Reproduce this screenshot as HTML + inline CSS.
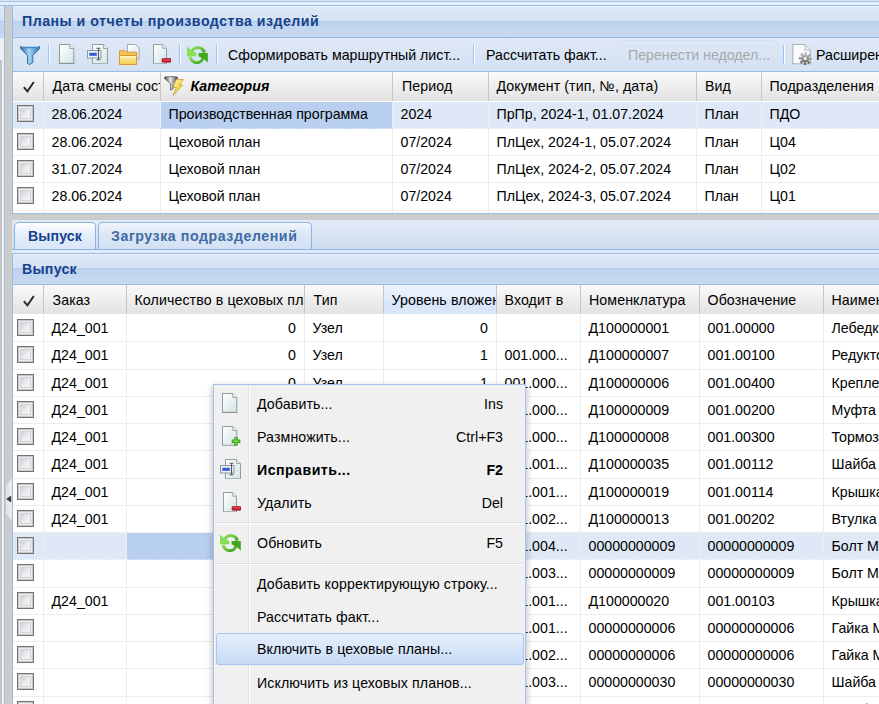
<!DOCTYPE html>
<html><head><meta charset="utf-8"><title>UI</title><style>
*{box-sizing:border-box}
html,body{margin:0;padding:0}
body{width:879px;height:704px;overflow:hidden;position:relative;background:#dfe8f6;font-family:"Liberation Sans",sans-serif;font-size:14.2px;color:#000}
.a{position:absolute}
.t{position:absolute;white-space:nowrap;line-height:16px}
.hl{position:absolute;height:1px}
.vl{position:absolute;width:1px}
.ttl{color:#15428b;font-weight:bold}
.cb{position:absolute;width:17px;height:17px;border:1px solid #727272;background:#ebebeb;box-shadow:inset 0 0 0 1px #c9c9c9}
.cb::after{content:"";position:absolute;left:2px;top:2px;right:2px;bottom:2px;border:1px solid #d2d4d8;background:linear-gradient(135deg,#cbd0d9 0%,#e9ebee 50%,#f5f5f5 100%)}
.clip{position:absolute;overflow:hidden;white-space:nowrap}
</style></head>
<body>
<div class="a" style="left:0;top:0;width:879px;height:5px;background:#e5eefb"></div><div class="hl" style="left:0;top:0;width:879px;background:#d6e0ee"></div><div class="hl" style="left:0;top:1px;width:879px;background:#a9c4ea"></div><div class="hl" style="left:0;top:5px;width:879px;background:#99bbe8"></div><div class="a" style="left:0;top:38px;width:4px;height:22px;background:#f0f0f0"></div><div class="a" style="left:0;top:60px;width:2px;height:644px;background:#c3c3c3"></div><div class="a" style="left:2px;top:60px;width:2px;height:644px;background:#f0f0f0"></div><div class="vl" style="left:4px;top:5px;height:699px;background:#99bbe8"></div><div class="a" style="left:5px;top:6px;width:7px;height:698px;background:#cccccc"></div><div class="vl" style="left:12px;top:5px;height:209px;background:#99bbe8"></div><div class="vl" style="left:12px;top:253px;height:451px;background:#99bbe8"></div><svg class="a" style="left:5px;top:477px" width="7" height="46"><defs><linearGradient id="gH" x1="0" x2="1"><stop offset="0" stop-color="#e2e2e2"/><stop offset="1" stop-color="#efefef"/></linearGradient></defs><path d="M7 1 L1 9 V36 L7 44Z" fill="url(#gH)"/><path d="M6.2 18.5 L1.2 22 L6.2 25.5Z" fill="#383838"/></svg><svg width="0" height="0" style="position:absolute">
<defs>
<linearGradient id="gPage" x1="0" y1="0" x2="1" y2="1"><stop offset="0" stop-color="#ffffff"/><stop offset="1" stop-color="#d3e4e4"/></linearGradient>
<linearGradient id="gFun" x1="0" y1="0" x2="1" y2="0"><stop offset="0" stop-color="#2a6fb0"/><stop offset="0.45" stop-color="#a6d4f2"/><stop offset="1" stop-color="#2d78b8"/></linearGradient>
<linearGradient id="gFold" x1="0" y1="0" x2="0" y2="1"><stop offset="0" stop-color="#fdf2b8"/><stop offset="1" stop-color="#f2cf48"/></linearGradient>
<linearGradient id="gGreen" x1="0" y1="0" x2="1" y2="1"><stop offset="0" stop-color="#92e35a"/><stop offset="1" stop-color="#3aa41a"/></linearGradient>
<linearGradient id="gGray" x1="0" y1="0" x2="1" y2="0"><stop offset="0" stop-color="#404040"/><stop offset="0.45" stop-color="#e8e8e8"/><stop offset="1" stop-color="#484848"/></linearGradient>
<linearGradient id="gGearT" x1="0" y1="0" x2="0" y2="1"><stop offset="0" stop-color="#b4b4b4"/><stop offset="1" stop-color="#6e6e6e"/></linearGradient><linearGradient id="gBolt" x1="0" y1="0" x2="1" y2="1"><stop offset="0" stop-color="#fff6b8"/><stop offset="0.5" stop-color="#f6dc50"/><stop offset="1" stop-color="#e0a818"/></linearGradient>
<symbol id="iPage" viewBox="0 0 20 20"><path d="M1.5 0.5 H11.8 L15.8 4.5 V19.3 H1.5Z" fill="url(#gPage)" stroke="#8f9d9f"/><path d="M11.8 0.5 V4.5 H15.8" fill="#eef4f4" stroke="#9aa8a8"/><path d="M0.5 19.6 H17" stroke="#5f6f6f" stroke-width="0.9" opacity="0.45"/></symbol>
<symbol id="iFunnel" viewBox="0 0 20 20"><path d="M0.5 1.5 H19.5 V3.5 L12.8 10.5 V17.5 L10 19.5 L7.5 18.5 V10.5 L0.5 3.5Z" fill="url(#gFun)" stroke="#2a65a0" stroke-width="0.9"/><path d="M0.8 1 H19.2 V3.2 H0.8Z" fill="#3b7fc0"/><path d="M1.5 1.6 H18.5" stroke="#bfe3fb" stroke-width="0.9"/></symbol>
<symbol id="iEdit" viewBox="0 0 22 20"><path d="M5.5 0.5 H16.5 L20.5 4.5 V19.8 H5.5Z" fill="url(#gPage)" stroke="#8f9d9f"/><path d="M16.5 0.5 V4.5 H20.5" fill="#eef4f4" stroke="#9aa8a8"/><rect x="0.5" y="6.5" width="13.5" height="7.5" fill="#eef2f8" stroke="#8a96a6"/><rect x="2.3" y="8.8" width="7.5" height="3" fill="#2f5ad8"/><path d="M9.5 4.2 H13.5 M11.5 4.2 V15.8 M9.5 15.8 H13.5" stroke="#5a5a5a" stroke-width="1.1" fill="none"/></symbol>
<symbol id="iFolder" viewBox="0 0 22 21"><path d="M8.5 0.5 H16.5 L20.2 4.2 V15 H8.5Z" fill="url(#gPage)" stroke="#a0acb4"/><path d="M0.5 6.8 H5.8 L7 8.2 H17.5 V20.5 H0.5Z" fill="#f3c45c" stroke="#dc962c"/><path d="M0.5 11.5 H17.5 V20.5 H0.5Z" fill="url(#gFold)" stroke="#dc962c"/><path d="M1.5 12.5 H16.5" stroke="#fff6d0" stroke-width="1"/></symbol>
<symbol id="iDel" viewBox="0 0 20 20"><path d="M2.5 0.5 H11.8 L15.5 4.2 V19.8 H2.5Z" fill="url(#gPage)" stroke="#8f9d9f"/><path d="M11.8 0.5 V4.2 H15.5" fill="#eef4f4" stroke="#9aa8a8"/><rect x="11" y="14.6" width="9" height="3.6" rx="0.8" fill="#c8202c" stroke="#9c1420" stroke-width="0.7"/><path d="M12 15.9 H19" stroke="#f06070" stroke-width="0.8"/></symbol>
<symbol id="iAdd" viewBox="0 0 20 20"><path d="M1.5 0.5 H11.8 L15.8 4.5 V19.3 H1.5Z" fill="url(#gPage)" stroke="#8f9d9f"/><path d="M11.8 0.5 V4.5 H15.8" fill="#eef4f4" stroke="#9aa8a8"/><path d="M15 11 V19.6 M10.7 15.3 H19.3" stroke="#2f9a1a" stroke-width="3.4"/><path d="M15 11.8 V18.8 M11.5 15.3 H18.5" stroke="#74d44a" stroke-width="1.6"/></symbol>
<symbol id="iRefresh" viewBox="0 0 22 20"><path d="M5.2 9.5 A6.6 6.6 0 0 1 18.2 8.6" fill="none" stroke="url(#gGreen)" stroke-width="3.2"/><path d="M4.2 12.6 A6.6 6.6 0 0 0 17.2 13.5" fill="none" stroke="url(#gGreen)" stroke-width="3.2"/><path d="M1 2.6 L4 5.2 L10.2 9 V12.2 H1Z" fill="#86e056"/><path d="M21.8 18.4 L18.8 15.8 L12.6 12.2 V9 H21.8Z" fill="#3da81c"/></symbol>
<symbol id="iGear" viewBox="0 0 20 22"><path d="M0.8 1.5 H12.5 L18.3 7.3 V20.8 H0.8Z" fill="#fbfbfb" stroke="#a9b1b9" stroke-width="1.1"/><path d="M12.5 1.5 V7.3 H18.3" fill="#e8ecef" stroke="#b8c0c6" stroke-width="0.8"/><circle cx="13.2" cy="15.6" r="5" fill="none" stroke="url(#gGearT)" stroke-width="2.8" stroke-dasharray="2.3 1.62" stroke-dashoffset="1.15"/><circle cx="13.2" cy="15.6" r="3.9" fill="url(#gGearT)"/><rect x="11.8" y="14.2" width="2.8" height="2.8" fill="#f4f4f4"/></symbol>
<symbol id="iHdFilter" viewBox="0 0 21 20"><path d="M0.5 1 Q7 0 13.5 1 V2.5 L9 7.5 V13 L6.5 14 V7.5 L0.5 2.5Z" fill="url(#gGray)" stroke="#505050" stroke-width="0.7"/><path d="M12 3.5 L19.5 3.5 L15 9 L18.5 9 L9 19.5 L12.5 11.5 L9.5 11.5Z" fill="url(#gBolt)" stroke="#c08a10" stroke-width="0.6"/></symbol>
</defs></svg><div class="a" style="left:0px;top:6px;width:4px;height:15px;background:linear-gradient(#dfe9f6,#d5e2f3)"></div><div class="hl" style="left:0px;top:6px;width:4px;background:#eef3fa"></div><div class="hl" style="left:0px;top:21px;width:4px;background:#b4cdef"></div><div class="a" style="left:0px;top:22px;width:4px;height:16px;background:linear-gradient(#bfd3ee,#c8daf1)"></div><div class="a" style="left:13px;top:6px;width:866px;height:15px;background:linear-gradient(#dfe9f6,#d5e2f3)"></div><div class="hl" style="left:13px;top:6px;width:866px;background:#eef3fa"></div><div class="hl" style="left:13px;top:21px;width:866px;background:#b4cdef"></div><div class="a" style="left:13px;top:22px;width:866px;height:15px;background:linear-gradient(#bfd3ee,#c8daf1)"></div><div class="hl" style="left:13px;top:37px;width:866px;background:#99bbe8"></div><div class="t" style="left:22px;top:13px;font-weight:bold;color:#15428b;letter-spacing:0.48px">Планы и отчеты производства изделий</div><div class="a" style="left:13px;top:38px;width:866px;height:33px;background:linear-gradient(#dfe8f6,#d3e1f3)"></div><div class="hl" style="left:13px;top:71px;width:866px;background:#99bbe8"></div><svg class="a" style="left:20px;top:45px" width="20" height="20"><use href="#iFunnel"/></svg><div class="vl" style="left:48px;top:45px;height:19px;background:#98c0f4"></div><div class="vl" style="left:49px;top:45px;height:19px;background:#ffffff"></div><svg class="a" style="left:57.5px;top:44px" width="20" height="20"><use href="#iPage"/></svg><svg class="a" style="left:87px;top:44px" width="22" height="20"><use href="#iEdit"/></svg><svg class="a" style="left:119px;top:44px" width="22" height="21"><use href="#iFolder"/></svg><svg class="a" style="left:151px;top:44px" width="20" height="20"><use href="#iDel"/></svg><div class="vl" style="left:179px;top:45px;height:19px;background:#98c0f4"></div><div class="vl" style="left:180px;top:45px;height:19px;background:#ffffff"></div><svg class="a" style="left:186px;top:44px" width="22" height="20"><use href="#iRefresh"/></svg><div class="vl" style="left:216px;top:45px;height:19px;background:#98c0f4"></div><div class="vl" style="left:217px;top:45px;height:19px;background:#ffffff"></div><div class="t" style="left:228px;top:47px;">Сформировать маршрутный лист...</div><div class="vl" style="left:473px;top:45px;height:19px;background:#98c0f4"></div><div class="vl" style="left:474px;top:45px;height:19px;background:#ffffff"></div><div class="t" style="left:486px;top:47px;">Рассчитать факт...</div><div class="a" style="left:620px;top:40px;width:158px;height:28px;border:1px solid #d6e1ef;border-radius:3px"></div><div class="t" style="left:628px;top:47px;color:#a6a8ac">Перенести недодел...</div><div class="vl" style="left:783px;top:45px;height:19px;background:#98c0f4"></div><div class="vl" style="left:784px;top:45px;height:19px;background:#ffffff"></div><svg class="a" style="left:792px;top:43px" width="20" height="22"><use href="#iGear"/></svg><div class="t" style="left:816px;top:47px;">Расширенный поиск</div><div class="a" style="left:13px;top:0;width:866px;height:214px;overflow:hidden"></div><div class="a" style="left:13px;top:72px;width:866px;height:29px;background:linear-gradient(#fafafa,#e2e2e2)"></div><div class="vl" style="left:43px;top:72px;height:29px;background:#c6c6c6"></div><div class="vl" style="left:160px;top:72px;height:29px;background:#c6c6c6"></div><div class="vl" style="left:392px;top:72px;height:29px;background:#c6c6c6"></div><div class="vl" style="left:488px;top:72px;height:29px;background:#c6c6c6"></div><div class="vl" style="left:696px;top:72px;height:29px;background:#c6c6c6"></div><div class="vl" style="left:761px;top:72px;height:29px;background:#c6c6c6"></div><div class="clip" style="left:14px;top:72px;width:29px;height:29px"><svg class="a" style="left:8.5px;top:8.5px" width="12" height="12"><path d="M0.8 6.2 L4.4 10.4 L10.8 1" fill="none" stroke="#2a2a2a" stroke-width="1.9" stroke-linejoin="miter"/></svg></div><div class="clip" style="left:44px;top:72px;width:116px;height:29px"><div class="t" style="left:8.5px;top:6px;letter-spacing:0.1px;">Дата смены состояния</div></div><div class="clip" style="left:161px;top:72px;width:231px;height:29px"><svg class="a" style="left:3px;top:4px" width="21" height="20"><use href="#iHdFilter"/></svg><div class="t" style="left:29.5px;top:6px;letter-spacing:0.1px;font-weight:bold;font-style:italic;letter-spacing:0.05px">Категория</div></div><div class="clip" style="left:393px;top:72px;width:95px;height:29px"><div class="t" style="left:9px;top:6px;letter-spacing:0.1px;">Период</div></div><div class="clip" style="left:489px;top:72px;width:207px;height:29px"><div class="t" style="left:7.5px;top:6px;letter-spacing:0.1px;">Документ (тип, №, дата)</div></div><div class="clip" style="left:697px;top:72px;width:64px;height:29px"><div class="t" style="left:8px;top:6px;letter-spacing:0.1px;">Вид</div></div><div class="clip" style="left:762px;top:72px;width:238px;height:29px"><div class="t" style="left:7.5px;top:6px;letter-spacing:0.1px;">Подразделения</div></div><div class="a" style="left:13px;top:101px;width:866px;height:603px;background:#fff"></div><div class="a" style="left:13px;top:102px;width:866px;height:27px;background:#dfe8f6"></div><div class="a" style="left:161px;top:102px;width:231px;height:27px;background:#b9cff0"></div><div class="a" style="left:13px;top:128px;width:866px;height:1px;background:repeating-linear-gradient(90deg,rgba(255,255,255,0.85) 0 1px,transparent 1px 3px)"></div><div class="hl" style="left:13px;top:155px;width:866px;background:#ededed"></div><div class="hl" style="left:13px;top:182px;width:866px;background:#ededed"></div><div class="hl" style="left:13px;top:210px;width:866px;background:#ededed"></div><div class="vl" style="left:43px;top:102px;height:603px;background:#ededed"></div><div class="vl" style="left:160px;top:102px;height:603px;background:#ededed"></div><div class="vl" style="left:392px;top:102px;height:603px;background:#ededed"></div><div class="vl" style="left:488px;top:102px;height:603px;background:#ededed"></div><div class="vl" style="left:696px;top:102px;height:603px;background:#ededed"></div><div class="vl" style="left:761px;top:102px;height:603px;background:#ededed"></div><div class="cb" style="left:17px;top:105px"></div><div class="clip" style="left:44px;top:106.08px;width:116px;height:17px;line-height:16px;padding-left:7.5px">28.06.2024</div><div class="clip" style="left:161px;top:106.08px;width:231px;height:17px;line-height:16px;padding-left:7.5px">Производственная программа</div><div class="clip" style="left:393px;top:106.08px;width:95px;height:17px;line-height:16px;padding-left:7.5px">2024</div><div class="clip" style="left:489px;top:106.08px;width:207px;height:17px;line-height:16px;padding-left:7.5px">ПрПр, 2024-1, 01.07.2024</div><div class="clip" style="left:697px;top:106.08px;width:64px;height:17px;line-height:16px;padding-left:7.5px">План</div><div class="clip" style="left:762px;top:106.08px;width:238px;height:17px;line-height:16px;padding-left:7.5px">ПДО</div><div class="cb" style="left:17px;top:133px"></div><div class="clip" style="left:44px;top:134.08px;width:116px;height:17px;line-height:16px;padding-left:7.5px">28.06.2024</div><div class="clip" style="left:161px;top:134.08px;width:231px;height:17px;line-height:16px;padding-left:7.5px">Цеховой план</div><div class="clip" style="left:393px;top:134.08px;width:95px;height:17px;line-height:16px;padding-left:7.5px">07/2024</div><div class="clip" style="left:489px;top:134.08px;width:207px;height:17px;line-height:16px;padding-left:7.5px">ПлЦех, 2024-1, 05.07.2024</div><div class="clip" style="left:697px;top:134.08px;width:64px;height:17px;line-height:16px;padding-left:7.5px">План</div><div class="clip" style="left:762px;top:134.08px;width:238px;height:17px;line-height:16px;padding-left:7.5px">Ц04</div><div class="cb" style="left:17px;top:160px"></div><div class="clip" style="left:44px;top:161.08px;width:116px;height:17px;line-height:16px;padding-left:7.5px">31.07.2024</div><div class="clip" style="left:161px;top:161.08px;width:231px;height:17px;line-height:16px;padding-left:7.5px">Цеховой план</div><div class="clip" style="left:393px;top:161.08px;width:95px;height:17px;line-height:16px;padding-left:7.5px">07/2024</div><div class="clip" style="left:489px;top:161.08px;width:207px;height:17px;line-height:16px;padding-left:7.5px">ПлЦех, 2024-2, 05.07.2024</div><div class="clip" style="left:697px;top:161.08px;width:64px;height:17px;line-height:16px;padding-left:7.5px">План</div><div class="clip" style="left:762px;top:161.08px;width:238px;height:17px;line-height:16px;padding-left:7.5px">Ц02</div><div class="cb" style="left:17px;top:187px"></div><div class="clip" style="left:44px;top:188.08px;width:116px;height:17px;line-height:16px;padding-left:7.5px">28.06.2024</div><div class="clip" style="left:161px;top:188.08px;width:231px;height:17px;line-height:16px;padding-left:7.5px">Цеховой план</div><div class="clip" style="left:393px;top:188.08px;width:95px;height:17px;line-height:16px;padding-left:7.5px">07/2024</div><div class="clip" style="left:489px;top:188.08px;width:207px;height:17px;line-height:16px;padding-left:7.5px">ПлЦех, 2024-3, 05.07.2024</div><div class="clip" style="left:697px;top:188.08px;width:64px;height:17px;line-height:16px;padding-left:7.5px">План</div><div class="clip" style="left:762px;top:188.08px;width:238px;height:17px;line-height:16px;padding-left:7.5px">Ц01</div><div class="hl" style="left:12px;top:213px;width:867px;background:#99bbe8"></div><div class="a" style="left:5px;top:214px;width:874px;height:6px;background:#cccccc"></div><div class="a" style="left:12px;top:220px;width:867px;height:29px;background:linear-gradient(#e2eaf6,#cedcef)"></div><div class="hl" style="left:12px;top:249px;width:867px;background:#8db2e3"></div><div class="a" style="left:12px;top:250px;width:867px;height:3px;background:#e0ebfa"></div><div class="hl" style="left:13px;top:253px;width:866px;background:#99bbe8"></div><div class="a" style="left:14px;top:222px;width:82px;height:27px;border:1px solid #8db2e3;border-bottom:none;border-radius:5px 5px 0 0;background:linear-gradient(#ffffff 0%,#e7effa 40%,#d8e6f8 100%)"></div><div class="t" style="left:28px;top:228px;font-weight:bold;color:#15428b;letter-spacing:0.1px">Выпуск</div><div class="a" style="left:98px;top:222px;width:214px;height:27px;border:1px solid #8db2e3;border-bottom:none;border-radius:5px 5px 0 0;background:linear-gradient(#f2f6fc 0%,#dde8f6 40%,#d2e0f3 100%)"></div><div class="t" style="left:111px;top:228px;font-weight:bold;color:#416aa3;letter-spacing:0.55px">Загрузка подразделений</div><div class="a" style="left:13px;top:254px;width:866px;height:14px;background:linear-gradient(#dfe9f6,#d5e2f3)"></div><div class="hl" style="left:13px;top:254px;width:866px;background:#eef3fa"></div><div class="hl" style="left:13px;top:268px;width:866px;background:#b4cdef"></div><div class="a" style="left:13px;top:269px;width:866px;height:15px;background:linear-gradient(#bfd3ee,#c8daf1)"></div><div class="hl" style="left:13px;top:284px;width:866px;background:#99bbe8"></div><div class="t" style="left:22px;top:261px;font-weight:bold;color:#15428b;letter-spacing:0.25px">Выпуск</div><div class="a" style="left:13px;top:285px;width:866px;height:29px;background:linear-gradient(#fafafa,#e2e2e2)"></div><div class="a" style="left:384px;top:285px;width:112px;height:29px;background:linear-gradient(#e9f2fc 0%,#e4eefb 45%,#d6e5f8 55%,#d9e7f9 100%)"></div><div class="vl" style="left:43px;top:285px;height:29px;background:#c6c6c6"></div><div class="vl" style="left:126px;top:285px;height:29px;background:#c6c6c6"></div><div class="vl" style="left:304px;top:285px;height:29px;background:#c6c6c6"></div><div class="vl" style="left:383px;top:285px;height:29px;background:#c6c6c6"></div><div class="vl" style="left:496px;top:285px;height:29px;background:#c6c6c6"></div><div class="vl" style="left:580px;top:285px;height:29px;background:#c6c6c6"></div><div class="vl" style="left:699px;top:285px;height:29px;background:#c6c6c6"></div><div class="vl" style="left:823px;top:285px;height:29px;background:#c6c6c6"></div><div class="clip" style="left:14px;top:285px;width:29px;height:29px"><svg class="a" style="left:8.5px;top:9.5px" width="12" height="12"><path d="M0.8 6.2 L4.4 10.4 L10.8 1" fill="none" stroke="#2a2a2a" stroke-width="1.9" stroke-linejoin="miter"/></svg></div><div class="clip" style="left:44px;top:285px;width:82px;height:29px"><div class="t" style="left:8.5px;top:7px;letter-spacing:0.1px;">Заказ</div></div><div class="clip" style="left:127px;top:285px;width:177px;height:29px"><div class="t" style="left:7.5px;top:7px;letter-spacing:0.1px;">Количество в цеховых планах</div></div><div class="clip" style="left:305px;top:285px;width:78px;height:29px"><div class="t" style="left:8.5px;top:7px;letter-spacing:0.1px;">Тип</div></div><div class="clip" style="left:384px;top:285px;width:112px;height:29px"><div class="t" style="left:7.5px;top:7px;letter-spacing:0.1px;">Уровень вложенности</div></div><div class="clip" style="left:497px;top:285px;width:83px;height:29px"><div class="t" style="left:7.5px;top:7px;letter-spacing:0.1px;">Входит в</div></div><div class="clip" style="left:581px;top:285px;width:118px;height:29px"><div class="t" style="left:8px;top:7px;letter-spacing:0.1px;">Номенклатура</div></div><div class="clip" style="left:700px;top:285px;width:123px;height:29px"><div class="t" style="left:7.5px;top:7px;letter-spacing:0.1px;">Обозначение</div></div><div class="clip" style="left:824px;top:285px;width:176px;height:29px"><div class="t" style="left:7.5px;top:7px;letter-spacing:0.1px;">Наименование</div></div><div class="a" style="left:13px;top:314px;width:866px;height:390px;background:#fff"></div><div class="hl" style="left:13px;top:341px;width:866px;background:#ededed"></div><div class="hl" style="left:13px;top:369px;width:866px;background:#ededed"></div><div class="hl" style="left:13px;top:396px;width:866px;background:#ededed"></div><div class="hl" style="left:13px;top:423px;width:866px;background:#ededed"></div><div class="hl" style="left:13px;top:450px;width:866px;background:#ededed"></div><div class="hl" style="left:13px;top:478px;width:866px;background:#ededed"></div><div class="hl" style="left:13px;top:505px;width:866px;background:#ededed"></div><div class="hl" style="left:13px;top:532px;width:866px;background:#ededed"></div><div class="a" style="left:13px;top:533px;width:866px;height:27px;background:#dfe8f6"></div><div class="a" style="left:127px;top:533px;width:177px;height:27px;background:#b9cff0"></div><div class="a" style="left:13px;top:559px;width:866px;height:1px;background:repeating-linear-gradient(90deg,rgba(255,255,255,0.85) 0 1px,transparent 1px 3px)"></div><div class="hl" style="left:13px;top:587px;width:866px;background:#ededed"></div><div class="hl" style="left:13px;top:614px;width:866px;background:#ededed"></div><div class="hl" style="left:13px;top:641px;width:866px;background:#ededed"></div><div class="hl" style="left:13px;top:668px;width:866px;background:#ededed"></div><div class="hl" style="left:13px;top:696px;width:866px;background:#ededed"></div><div class="hl" style="left:13px;top:723px;width:866px;background:#ededed"></div><div class="vl" style="left:43px;top:315px;height:390px;background:#ededed"></div><div class="vl" style="left:126px;top:315px;height:390px;background:#ededed"></div><div class="vl" style="left:304px;top:315px;height:390px;background:#ededed"></div><div class="vl" style="left:383px;top:315px;height:390px;background:#ededed"></div><div class="vl" style="left:496px;top:315px;height:390px;background:#ededed"></div><div class="vl" style="left:580px;top:315px;height:390px;background:#ededed"></div><div class="vl" style="left:699px;top:315px;height:390px;background:#ededed"></div><div class="vl" style="left:823px;top:315px;height:390px;background:#ededed"></div><div class="cb" style="left:17px;top:319px"></div><div class="clip" style="left:44px;top:320.08px;width:82px;height:17px;line-height:16px;padding-left:7.5px">Д24_001</div><div class="clip" style="left:127px;top:320.08px;width:177px;height:17px;line-height:16px;text-align:right;padding-right:8px">0</div><div class="clip" style="left:305px;top:320.08px;width:78px;height:17px;line-height:16px;padding-left:7.5px">Узел</div><div class="clip" style="left:384px;top:320.08px;width:112px;height:17px;line-height:16px;text-align:right;padding-right:8px">0</div><div class="clip" style="left:581px;top:320.08px;width:118px;height:17px;line-height:16px;padding-left:7.5px">Д100000001</div><div class="clip" style="left:700px;top:320.08px;width:123px;height:17px;line-height:16px;padding-left:7.5px">001.00000</div><div class="clip" style="left:824px;top:320.08px;width:176px;height:17px;line-height:16px;padding-left:7.5px">Лебедка</div><div class="cb" style="left:17px;top:346px"></div><div class="clip" style="left:44px;top:347.08px;width:82px;height:17px;line-height:16px;padding-left:7.5px">Д24_001</div><div class="clip" style="left:127px;top:347.08px;width:177px;height:17px;line-height:16px;text-align:right;padding-right:8px">0</div><div class="clip" style="left:305px;top:347.08px;width:78px;height:17px;line-height:16px;padding-left:7.5px">Узел</div><div class="clip" style="left:384px;top:347.08px;width:112px;height:17px;line-height:16px;text-align:right;padding-right:8px">1</div><div class="clip" style="left:497px;top:347.08px;width:83px;height:17px;line-height:16px;padding-left:7.5px">001.000...</div><div class="clip" style="left:581px;top:347.08px;width:118px;height:17px;line-height:16px;padding-left:7.5px">Д100000007</div><div class="clip" style="left:700px;top:347.08px;width:123px;height:17px;line-height:16px;padding-left:7.5px">001.00100</div><div class="clip" style="left:824px;top:347.08px;width:176px;height:17px;line-height:16px;padding-left:7.5px">Редуктор</div><div class="cb" style="left:17px;top:374px"></div><div class="clip" style="left:44px;top:375.08px;width:82px;height:17px;line-height:16px;padding-left:7.5px">Д24_001</div><div class="clip" style="left:127px;top:375.08px;width:177px;height:17px;line-height:16px;text-align:right;padding-right:8px">0</div><div class="clip" style="left:305px;top:375.08px;width:78px;height:17px;line-height:16px;padding-left:7.5px">Узел</div><div class="clip" style="left:384px;top:375.08px;width:112px;height:17px;line-height:16px;text-align:right;padding-right:8px">1</div><div class="clip" style="left:497px;top:375.08px;width:83px;height:17px;line-height:16px;padding-left:7.5px">001.000...</div><div class="clip" style="left:581px;top:375.08px;width:118px;height:17px;line-height:16px;padding-left:7.5px">Д100000006</div><div class="clip" style="left:700px;top:375.08px;width:123px;height:17px;line-height:16px;padding-left:7.5px">001.00400</div><div class="clip" style="left:824px;top:375.08px;width:176px;height:17px;line-height:16px;padding-left:7.5px">Крепление</div><div class="cb" style="left:17px;top:401px"></div><div class="clip" style="left:44px;top:402.08px;width:82px;height:17px;line-height:16px;padding-left:7.5px">Д24_001</div><div class="clip" style="left:127px;top:402.08px;width:177px;height:17px;line-height:16px;text-align:right;padding-right:8px">0</div><div class="clip" style="left:305px;top:402.08px;width:78px;height:17px;line-height:16px;padding-left:7.5px">Узел</div><div class="clip" style="left:384px;top:402.08px;width:112px;height:17px;line-height:16px;text-align:right;padding-right:8px">1</div><div class="clip" style="left:497px;top:402.08px;width:83px;height:17px;line-height:16px;padding-left:7.5px">001.000...</div><div class="clip" style="left:581px;top:402.08px;width:118px;height:17px;line-height:16px;padding-left:7.5px">Д100000009</div><div class="clip" style="left:700px;top:402.08px;width:123px;height:17px;line-height:16px;padding-left:7.5px">001.00200</div><div class="clip" style="left:824px;top:402.08px;width:176px;height:17px;line-height:16px;padding-left:7.5px">Муфта</div><div class="cb" style="left:17px;top:428px"></div><div class="clip" style="left:44px;top:429.08px;width:82px;height:17px;line-height:16px;padding-left:7.5px">Д24_001</div><div class="clip" style="left:127px;top:429.08px;width:177px;height:17px;line-height:16px;text-align:right;padding-right:8px">0</div><div class="clip" style="left:305px;top:429.08px;width:78px;height:17px;line-height:16px;padding-left:7.5px">Узел</div><div class="clip" style="left:384px;top:429.08px;width:112px;height:17px;line-height:16px;text-align:right;padding-right:8px">1</div><div class="clip" style="left:497px;top:429.08px;width:83px;height:17px;line-height:16px;padding-left:7.5px">001.000...</div><div class="clip" style="left:581px;top:429.08px;width:118px;height:17px;line-height:16px;padding-left:7.5px">Д100000008</div><div class="clip" style="left:700px;top:429.08px;width:123px;height:17px;line-height:16px;padding-left:7.5px">001.00300</div><div class="clip" style="left:824px;top:429.08px;width:176px;height:17px;line-height:16px;padding-left:7.5px">Тормоз</div><div class="cb" style="left:17px;top:455px"></div><div class="clip" style="left:44px;top:456.08px;width:82px;height:17px;line-height:16px;padding-left:7.5px">Д24_001</div><div class="clip" style="left:127px;top:456.08px;width:177px;height:17px;line-height:16px;text-align:right;padding-right:8px">0</div><div class="clip" style="left:305px;top:456.08px;width:78px;height:17px;line-height:16px;padding-left:7.5px">Узел</div><div class="clip" style="left:384px;top:456.08px;width:112px;height:17px;line-height:16px;text-align:right;padding-right:8px">2</div><div class="clip" style="left:497px;top:456.08px;width:83px;height:17px;line-height:16px;padding-left:7.5px">001.001...</div><div class="clip" style="left:581px;top:456.08px;width:118px;height:17px;line-height:16px;padding-left:7.5px">Д100000035</div><div class="clip" style="left:700px;top:456.08px;width:123px;height:17px;line-height:16px;padding-left:7.5px">001.00112</div><div class="clip" style="left:824px;top:456.08px;width:176px;height:17px;line-height:16px;padding-left:7.5px">Шайба</div><div class="cb" style="left:17px;top:483px"></div><div class="clip" style="left:44px;top:484.08px;width:82px;height:17px;line-height:16px;padding-left:7.5px">Д24_001</div><div class="clip" style="left:127px;top:484.08px;width:177px;height:17px;line-height:16px;text-align:right;padding-right:8px">0</div><div class="clip" style="left:305px;top:484.08px;width:78px;height:17px;line-height:16px;padding-left:7.5px">Узел</div><div class="clip" style="left:384px;top:484.08px;width:112px;height:17px;line-height:16px;text-align:right;padding-right:8px">2</div><div class="clip" style="left:497px;top:484.08px;width:83px;height:17px;line-height:16px;padding-left:7.5px">001.001...</div><div class="clip" style="left:581px;top:484.08px;width:118px;height:17px;line-height:16px;padding-left:7.5px">Д100000019</div><div class="clip" style="left:700px;top:484.08px;width:123px;height:17px;line-height:16px;padding-left:7.5px">001.00114</div><div class="clip" style="left:824px;top:484.08px;width:176px;height:17px;line-height:16px;padding-left:7.5px">Крышка</div><div class="cb" style="left:17px;top:510px"></div><div class="clip" style="left:44px;top:511.08px;width:82px;height:17px;line-height:16px;padding-left:7.5px">Д24_001</div><div class="clip" style="left:127px;top:511.08px;width:177px;height:17px;line-height:16px;text-align:right;padding-right:8px">0</div><div class="clip" style="left:305px;top:511.08px;width:78px;height:17px;line-height:16px;padding-left:7.5px">Узел</div><div class="clip" style="left:384px;top:511.08px;width:112px;height:17px;line-height:16px;text-align:right;padding-right:8px">2</div><div class="clip" style="left:497px;top:511.08px;width:83px;height:17px;line-height:16px;padding-left:7.5px">001.002...</div><div class="clip" style="left:581px;top:511.08px;width:118px;height:17px;line-height:16px;padding-left:7.5px">Д100000013</div><div class="clip" style="left:700px;top:511.08px;width:123px;height:17px;line-height:16px;padding-left:7.5px">001.00202</div><div class="clip" style="left:824px;top:511.08px;width:176px;height:17px;line-height:16px;padding-left:7.5px">Втулка</div><div class="cb" style="left:17px;top:537px"></div><div class="clip" style="left:127px;top:538.08px;width:177px;height:17px;line-height:16px;text-align:right;padding-right:8px">0</div><div class="clip" style="left:305px;top:538.08px;width:78px;height:17px;line-height:16px;padding-left:7.5px">Деталь</div><div class="clip" style="left:384px;top:538.08px;width:112px;height:17px;line-height:16px;text-align:right;padding-right:8px">3</div><div class="clip" style="left:497px;top:538.08px;width:83px;height:17px;line-height:16px;padding-left:7.5px">001.004...</div><div class="clip" style="left:581px;top:538.08px;width:118px;height:17px;line-height:16px;padding-left:7.5px">00000000009</div><div class="clip" style="left:700px;top:538.08px;width:123px;height:17px;line-height:16px;padding-left:7.5px">00000000009</div><div class="clip" style="left:824px;top:538.08px;width:176px;height:17px;line-height:16px;padding-left:7.5px">Болт М</div><div class="cb" style="left:17px;top:564px"></div><div class="clip" style="left:127px;top:565.08px;width:177px;height:17px;line-height:16px;text-align:right;padding-right:8px">0</div><div class="clip" style="left:305px;top:565.08px;width:78px;height:17px;line-height:16px;padding-left:7.5px">Деталь</div><div class="clip" style="left:384px;top:565.08px;width:112px;height:17px;line-height:16px;text-align:right;padding-right:8px">3</div><div class="clip" style="left:497px;top:565.08px;width:83px;height:17px;line-height:16px;padding-left:7.5px">001.003...</div><div class="clip" style="left:581px;top:565.08px;width:118px;height:17px;line-height:16px;padding-left:7.5px">00000000009</div><div class="clip" style="left:700px;top:565.08px;width:123px;height:17px;line-height:16px;padding-left:7.5px">00000000009</div><div class="clip" style="left:824px;top:565.08px;width:176px;height:17px;line-height:16px;padding-left:7.5px">Болт М</div><div class="cb" style="left:17px;top:592px"></div><div class="clip" style="left:44px;top:593.08px;width:82px;height:17px;line-height:16px;padding-left:7.5px">Д24_001</div><div class="clip" style="left:127px;top:593.08px;width:177px;height:17px;line-height:16px;text-align:right;padding-right:8px">0</div><div class="clip" style="left:305px;top:593.08px;width:78px;height:17px;line-height:16px;padding-left:7.5px">Узел</div><div class="clip" style="left:384px;top:593.08px;width:112px;height:17px;line-height:16px;text-align:right;padding-right:8px">2</div><div class="clip" style="left:497px;top:593.08px;width:83px;height:17px;line-height:16px;padding-left:7.5px">001.001...</div><div class="clip" style="left:581px;top:593.08px;width:118px;height:17px;line-height:16px;padding-left:7.5px">Д100000020</div><div class="clip" style="left:700px;top:593.08px;width:123px;height:17px;line-height:16px;padding-left:7.5px">001.00103</div><div class="clip" style="left:824px;top:593.08px;width:176px;height:17px;line-height:16px;padding-left:7.5px">Крышка</div><div class="cb" style="left:17px;top:619px"></div><div class="clip" style="left:127px;top:620.08px;width:177px;height:17px;line-height:16px;text-align:right;padding-right:8px">0</div><div class="clip" style="left:305px;top:620.08px;width:78px;height:17px;line-height:16px;padding-left:7.5px">Деталь</div><div class="clip" style="left:384px;top:620.08px;width:112px;height:17px;line-height:16px;text-align:right;padding-right:8px">3</div><div class="clip" style="left:497px;top:620.08px;width:83px;height:17px;line-height:16px;padding-left:7.5px">001.001...</div><div class="clip" style="left:581px;top:620.08px;width:118px;height:17px;line-height:16px;padding-left:7.5px">00000000006</div><div class="clip" style="left:700px;top:620.08px;width:123px;height:17px;line-height:16px;padding-left:7.5px">00000000006</div><div class="clip" style="left:824px;top:620.08px;width:176px;height:17px;line-height:16px;padding-left:7.5px">Гайка М</div><div class="cb" style="left:17px;top:646px"></div><div class="clip" style="left:127px;top:647.08px;width:177px;height:17px;line-height:16px;text-align:right;padding-right:8px">0</div><div class="clip" style="left:305px;top:647.08px;width:78px;height:17px;line-height:16px;padding-left:7.5px">Деталь</div><div class="clip" style="left:384px;top:647.08px;width:112px;height:17px;line-height:16px;text-align:right;padding-right:8px">3</div><div class="clip" style="left:497px;top:647.08px;width:83px;height:17px;line-height:16px;padding-left:7.5px">001.002...</div><div class="clip" style="left:581px;top:647.08px;width:118px;height:17px;line-height:16px;padding-left:7.5px">00000000006</div><div class="clip" style="left:700px;top:647.08px;width:123px;height:17px;line-height:16px;padding-left:7.5px">00000000006</div><div class="clip" style="left:824px;top:647.08px;width:176px;height:17px;line-height:16px;padding-left:7.5px">Гайка М</div><div class="cb" style="left:17px;top:673px"></div><div class="clip" style="left:127px;top:674.08px;width:177px;height:17px;line-height:16px;text-align:right;padding-right:8px">0</div><div class="clip" style="left:305px;top:674.08px;width:78px;height:17px;line-height:16px;padding-left:7.5px">Деталь</div><div class="clip" style="left:384px;top:674.08px;width:112px;height:17px;line-height:16px;text-align:right;padding-right:8px">3</div><div class="clip" style="left:497px;top:674.08px;width:83px;height:17px;line-height:16px;padding-left:7.5px">001.003...</div><div class="clip" style="left:581px;top:674.08px;width:118px;height:17px;line-height:16px;padding-left:7.5px">00000000030</div><div class="clip" style="left:700px;top:674.08px;width:123px;height:17px;line-height:16px;padding-left:7.5px">00000000030</div><div class="clip" style="left:824px;top:674.08px;width:176px;height:17px;line-height:16px;padding-left:7.5px">Шайба</div><div class="cb" style="left:17px;top:701px"></div><div class="clip" style="left:127px;top:702.08px;width:177px;height:17px;line-height:16px;text-align:right;padding-right:8px">0</div><div class="clip" style="left:305px;top:702.08px;width:78px;height:17px;line-height:16px;padding-left:7.5px">Деталь</div><div class="clip" style="left:384px;top:702.08px;width:112px;height:17px;line-height:16px;text-align:right;padding-right:8px">3</div><div class="clip" style="left:497px;top:702.08px;width:83px;height:17px;line-height:16px;padding-left:7.5px">001.003...</div><div class="clip" style="left:581px;top:702.08px;width:118px;height:17px;line-height:16px;padding-left:7.5px">00000000030</div><div class="clip" style="left:700px;top:702.08px;width:123px;height:17px;line-height:16px;padding-left:7.5px">00000000030</div><div class="clip" style="left:824px;top:702.08px;width:176px;height:17px;line-height:16px;padding-left:7.5px">Шайба</div><div class="a" style="left:213px;top:384px;width:313px;height:330px;background:#f0f0f0;border:1px solid #a5bfe6;box-shadow:0 3px 6px 1px rgba(0,0,0,0.24)"></div><div class="vl" style="left:248px;top:387px;height:134px;background:#e0e0e0"></div><div class="vl" style="left:249px;top:387px;height:134px;background:#ffffff"></div><div class="vl" style="left:248px;top:525px;height:37px;background:#e0e0e0"></div><div class="vl" style="left:249px;top:525px;height:37px;background:#ffffff"></div><div class="vl" style="left:248px;top:566px;height:138px;background:#e0e0e0"></div><div class="vl" style="left:249px;top:566px;height:138px;background:#ffffff"></div><svg class="a" style="left:221px;top:393px" width="20" height="20"><use href="#iPage"/></svg><div class="t" style="left:257px;top:396px;letter-spacing:0.1px;">Добавить...</div><div class="t" style="left:380px;width:123px;text-align:right;top:396px;">Ins</div><svg class="a" style="left:221px;top:426px" width="20" height="20"><use href="#iAdd"/></svg><div class="t" style="left:257px;top:429px;letter-spacing:0.1px;">Размножить...</div><div class="t" style="left:380px;width:123px;text-align:right;top:429px;">Ctrl+F3</div><svg class="a" style="left:220px;top:459px" width="22" height="20"><use href="#iEdit"/></svg><div class="t" style="left:257px;top:462px;font-weight:bold;letter-spacing:0.45px;">Исправить...</div><div class="t" style="left:380px;width:123px;text-align:right;top:462px;font-weight:bold;">F2</div><svg class="a" style="left:221px;top:492px" width="20" height="20"><use href="#iDel"/></svg><div class="t" style="left:257px;top:495px;letter-spacing:0.1px;">Удалить</div><div class="t" style="left:380px;width:123px;text-align:right;top:495px;">Del</div><div class="hl" style="left:216px;top:522px;width:307px;background:#e0e0e0"></div><div class="hl" style="left:216px;top:523px;width:307px;background:#ffffff"></div><svg class="a" style="left:219px;top:532px" width="22" height="20"><use href="#iRefresh"/></svg><div class="t" style="left:257px;top:535px;letter-spacing:0.1px;">Обновить</div><div class="t" style="left:380px;width:123px;text-align:right;top:535px;">F5</div><div class="hl" style="left:216px;top:563px;width:307px;background:#e0e0e0"></div><div class="hl" style="left:216px;top:564px;width:307px;background:#ffffff"></div><div class="t" style="left:257px;top:576px;letter-spacing:0.1px;">Добавить корректирующую строку...</div><div class="t" style="left:257px;top:609px;letter-spacing:0.1px;">Рассчитать факт...</div><div class="a" style="left:216px;top:633px;width:308px;height:32px;border:1px solid #a9c6ee;border-radius:3px;background:linear-gradient(#e5effc,#c8dbf5)"></div><div class="t" style="left:257px;top:641px;letter-spacing:0.1px;">Включить в цеховые планы...</div><div class="t" style="left:257px;top:675px;letter-spacing:0.1px;">Исключить из цеховых планов...</div>
</body></html>
